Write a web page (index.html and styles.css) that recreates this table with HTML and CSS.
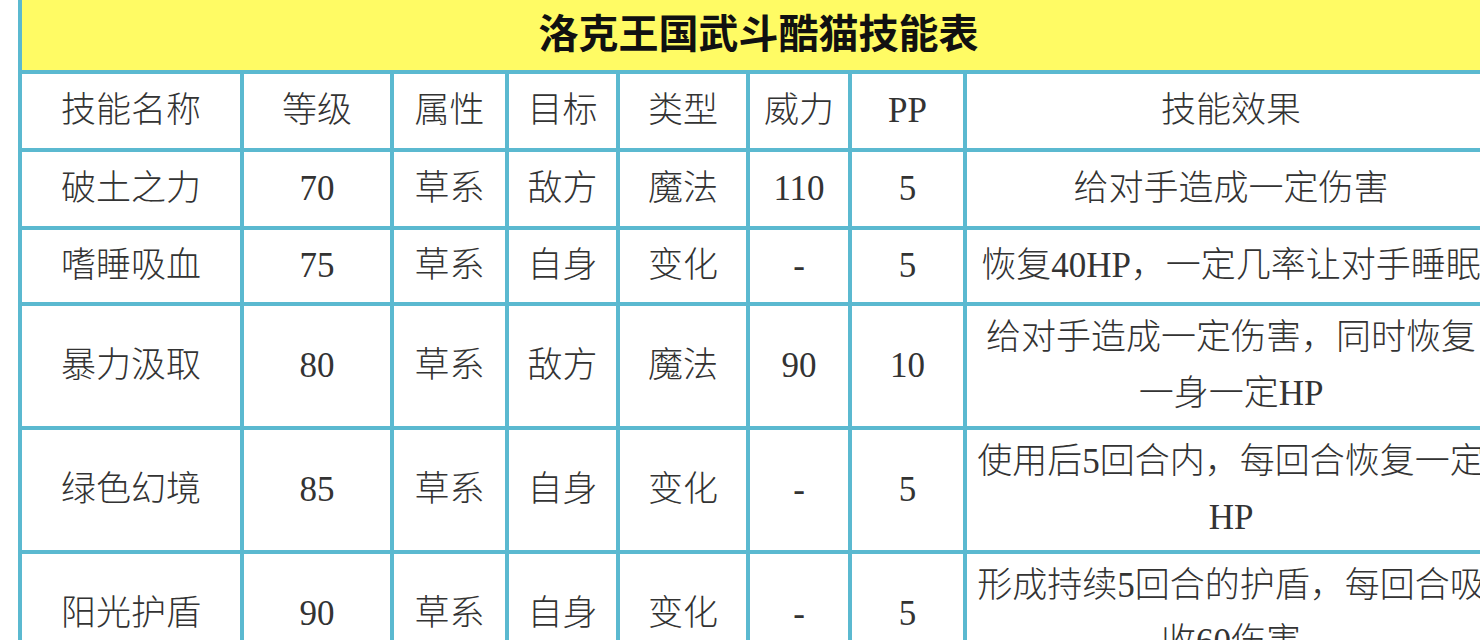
FILE: index.html
```html
<!DOCTYPE html>
<html lang="zh-CN">
<head>
<meta charset="utf-8">
<title>洛克王国武斗酷猫技能表</title>
<link rel="stylesheet" href="styles.css">
</head>
<body>
<table class="skills">
  <colgroup>
    <col class="c-name"><col class="c-level"><col class="c-attr"><col class="c-target"><col class="c-type"><col class="c-power"><col class="c-pp"><col class="c-effect">
  </colgroup>
  <thead>
    <tr class="title-row"><th colspan="8" class="title">洛克王国武斗酷猫技能表</th></tr>
  </thead>
  <tbody>
    <tr class="row">
      <td>技能名称</td><td>等级</td><td>属性</td><td>目标</td><td>类型</td><td>威力</td><td>PP</td><td>技能效果</td>
    </tr>
    <tr class="row">
      <td>破土之力</td><td>70</td><td>草系</td><td>敌方</td><td>魔法</td><td>110</td><td>5</td><td>给对手造成一定伤害</td>
    </tr>
    <tr class="row row-short">
      <td>嗜睡吸血</td><td>75</td><td>草系</td><td>自身</td><td>变化</td><td>-</td><td>5</td><td>恢复40HP，一定几率让对手睡眠</td>
    </tr>
    <tr class="row">
      <td>暴力汲取</td><td>80</td><td>草系</td><td>敌方</td><td>魔法</td><td>90</td><td>10</td><td>给对手造成一定伤害，同时恢复一身一定HP</td>
    </tr>
    <tr class="row">
      <td>绿色幻境</td><td>85</td><td>草系</td><td>自身</td><td>变化</td><td>-</td><td>5</td><td>使用后5回合内，每回合恢复一定HP</td>
    </tr>
    <tr class="row">
      <td>阳光护盾</td><td>90</td><td>草系</td><td>自身</td><td>变化</td><td>-</td><td>5</td><td>形成持续5回合的护盾，每回合吸收60伤害</td>
    </tr>
  </tbody>
</table>
</body>
</html>
```
FILE: styles.css
```css
html {
  overflow: hidden;
  background: #ffffff;
}
body {
  margin: 0;
  background: #ffffff;
  font-family: "Liberation Serif", "Noto Sans CJK SC", serif;
}
.skills {
  margin-left: 18px;
  border-collapse: collapse;
  table-layout: fixed;
  width: 1479px;
}
.c-name { width: 222px; }
.c-level { width: 150px; }
.c-attr { width: 115px; }
.c-target { width: 111px; }
.c-type { width: 130px; }
.c-power { width: 102px; }
.c-pp { width: 115px; }
.c-effect { width: 532px; }

.skills th,
.skills td {
  border: 4px solid #5bb9d0;
  text-align: center;
  vertical-align: middle;
}
.title {
  border-top: none !important;
  background: #fffb64;
  height: 70px;
  padding: 0;
  font-family: "Liberation Serif", "Noto Sans CJK SC", serif;
  font-size: 40px;
  font-weight: 700;
  color: #111;
  line-height: 46px;
}
.row td {
  height: 78px;
  padding: 4px 6px;
  font-size: 35px;
  font-weight: 300;
  line-height: 56px;
  color: #333333;
  box-sizing: border-box;
}
.row-short td {
  height: 76px;
}
```
